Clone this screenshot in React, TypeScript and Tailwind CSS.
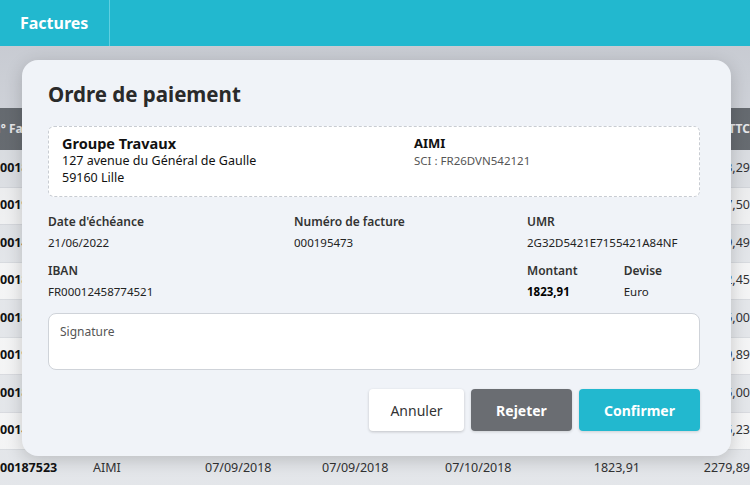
import React from 'react'

const rows = [
  ['00187523', 'AIMI', '07/09/2018', '07/09/2018', '07/10/2018', '1823,91', '2113,29'],
  ['00195473', 'AIMI', '07/09/2018', '07/09/2018', '07/10/2018', '1823,91', '2187,50'],
  ['00145621', 'AIMI', '07/09/2018', '07/09/2018', '07/10/2018', '1823,91', '2199,49'],
  ['00187523', 'AIMI', '07/09/2018', '07/09/2018', '07/10/2018', '1823,91', '2182,45'],
  ['00187523', 'AIMI', '07/09/2018', '07/09/2018', '07/10/2018', '1823,91', '2115,00'],
  ['00195473', 'AIMI', '07/09/2018', '07/09/2018', '07/10/2018', '1823,91', '2279,89'],
  ['00187523', 'AIMI', '07/09/2018', '07/09/2018', '07/10/2018', '1823,91', '2115,00'],
  ['00145621', 'AIMI', '07/09/2018', '07/09/2018', '07/10/2018', '1823,91', '2115,23'],
  ['00187523', 'AIMI', '07/09/2018', '07/09/2018', '07/10/2018', '1823,91', '2279,89'],
]

function Row({ cells, index }: { cells: string[]; index: number }) {
  return (
    <div
      className={`flex h-[37.5px] items-center border-b border-[#e2e4e8] text-[12.5px] text-[#333] ${
        index % 2 === 0 ? 'bg-[#eef0f3]' : 'bg-white'
      }`}
    >
      <div className="w-[93px] font-bold text-[#111]">{cells[0]}</div>
      <div className="w-[112px]">{cells[1]}</div>
      <div className="w-[117px]">{cells[2]}</div>
      <div className="w-[123px]">{cells[3]}</div>
      <div className="w-[120px]">{cells[4]}</div>
      <div className="w-[75px] text-right">{cells[5]}</div>
      <div className="w-[110px] text-right">{cells[6]}</div>
    </div>
  )
}

function Field({ label, value, bold }: { label: string; value: string; bold?: boolean }) {
  return (
    <div className="flex flex-col gap-[3px]">
      <span className="text-[12px] font-semibold text-[#333]">{label}</span>
      <span className={`text-[11.5px] ${bold ? 'font-bold text-black' : 'text-[#222]'}`}>{value}</span>
    </div>
  )
}

export default function App() {
  return (
    <div
      className="relative h-[485px] w-[750px] overflow-hidden bg-[#e6e8ed]"
      style={{ fontFamily: '"Noto Sans", "Open Sans", sans-serif' }}
    >
      <header className="relative z-20 flex h-[46px] bg-[#22b8cf]">
        <div className="flex w-[110px] items-center border-r border-[#5fcfe0] pl-5 text-[16px] font-bold text-white">
          Factures
        </div>
      </header>

      <div className="ml-[-9px] mt-[62px] w-[759px]">
        <div className="flex h-[42px] items-center justify-between bg-[#6f7377] text-[12px] font-bold text-white">
          <div>N° Facture</div>
          <div>TTC</div>
        </div>
        <div className="pl-[9px]">
          {rows.map((r, i) => (
            <Row key={i} cells={r} index={i} />
          ))}
        </div>
      </div>

      <div className="absolute inset-0 top-[46px] z-10 bg-gradient-to-b from-[#1e293b]/15 via-[#1e293b]/5 to-[#1e293b]/5" />

      <div className="absolute left-[22px] top-[60px] z-10 w-[709px] rounded-[16px] bg-[#f0f3f8] pb-[25px] pl-[26px] pr-[31px] pt-[19px] shadow-[0_4px_18px_rgba(0,0,0,0.18)]">
        <h2 className="text-[20.5px] font-bold text-[#2a2a2a]">Ordre de paiement</h2>

        <div className="mt-[16px] flex h-[71px] rounded-[6px] border border-dashed border-[#c8ccd2] bg-white px-[13px] pt-[8px]">
          <div className="w-[352px] text-[12.5px] leading-[17px] text-[#111]">
            <div className="text-[14.5px] font-bold">Groupe Travaux</div>
            <div>127 avenue du Général de Gaulle</div>
            <div>59160 Lille</div>
          </div>
          <div className="leading-[17px]">
            <div className="text-[13px] font-bold text-[#111]">AIMI</div>
            <div className="text-[11.5px] text-[#555]">SCI : FR26DVN542121</div>
          </div>
        </div>

        <div className="mt-[16px] grid grid-cols-[246px_233px_1fr] gap-y-[11px]">
          <Field label="Date d'échéance" value="21/06/2022" />
          <Field label="Numéro de facture" value="000195473" />
          <Field label="UMR" value="2G32D5421E7155421A84NF" />
          <Field label="IBAN" value="FR00012458774521" />
          <div />
          <div className="flex gap-[46px]">
            <Field label="Montant" value="1823,91" bold />
            <Field label="Devise" value="Euro" />
          </div>
        </div>

        <div className="mt-[13px] h-[57px] rounded-[8px] border border-[#cfd3d9] bg-white px-[11px] pt-[9px] text-[12px] text-[#555]">
          Signature
        </div>

        <div className="mt-[19px] flex justify-end gap-[7px]">
          <button className="h-[42px] w-[95px] rounded-[4px] bg-white text-[14px] text-[#333] shadow-[0_1px_3px_rgba(0,0,0,0.2)]">
            Annuler
          </button>
          <button className="h-[42px] w-[101px] rounded-[4px] bg-[#6a6d72] text-[14px] font-bold text-white shadow-[0_1px_3px_rgba(0,0,0,0.15)]">
            Rejeter
          </button>
          <button className="h-[42px] w-[121px] rounded-[4px] bg-[#22b8cf] text-[14px] font-bold text-white shadow-[0_1px_3px_rgba(0,0,0,0.15)]">
            Confirmer
          </button>
        </div>
      </div>
    </div>
  )
}
